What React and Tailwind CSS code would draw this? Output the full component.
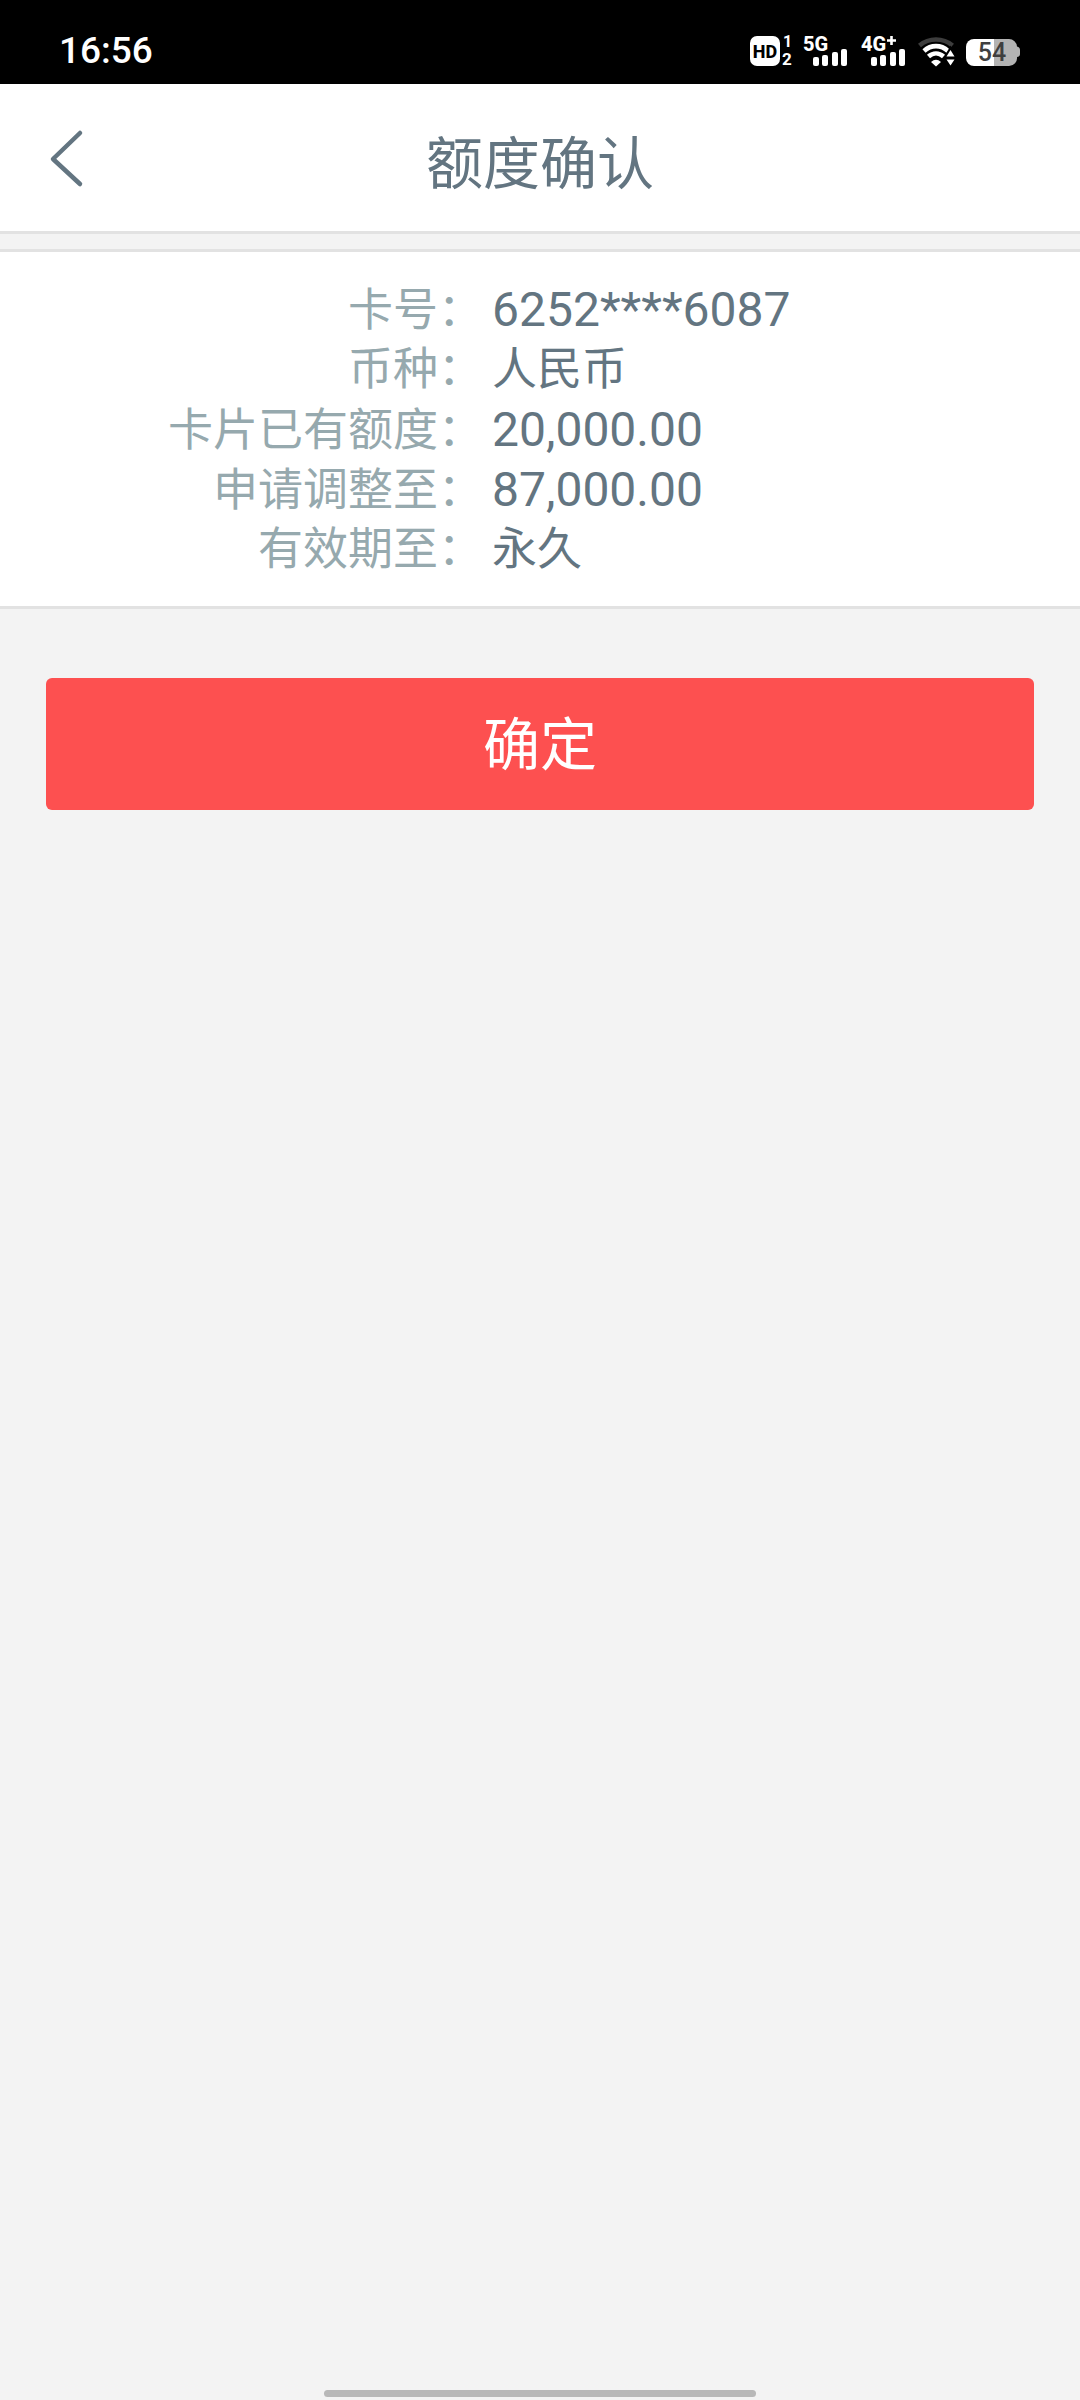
const rows = [
  { label: "卡号", value: "6252****6087", numeric: true },
  { label: "币种", value: "人民币", numeric: false },
  { label: "卡片已有额度", value: "20,000.00", numeric: true },
  { label: "申请调整至", value: "87,000.00", numeric: true },
  { label: "有效期至", value: "永久", numeric: false },
];

function HdIcon() {
  return (
    <svg className="h-9 w-[44px] shrink-0" viewBox="0 -2 44 36" role="img" aria-label="HD 1 2">
      <rect x="0" y="1" width="30" height="30" rx="7" fill="#fff" />
      <text x="15" y="23" textAnchor="middle" fontSize="18" fontWeight="800" fill="#000">HD</text>
      <text x="33" y="12" fontSize="16" fontWeight="700" fill="#fff">1</text>
      <text x="32" y="30" fontSize="17" fontWeight="700" fill="#fff">2</text>
    </svg>
  );
}

function SignalIcon({ name, plus }) {
  return (
    <svg className="h-9 w-[48px] shrink-0" viewBox="0 -2 48 36" role="img" aria-label={plus ? name + "+" : name}>
      <text x="0" y="16" fontSize="20" fontWeight="800" fill="#fff">{name}</text>
      {plus && <path d="M30.500 1V10M26 5.500H35" stroke="#fff" strokeWidth="2.600" />}
      <g fill="#fff">
        <rect x="10" y="22" width="6" height="9" rx="2" />
        <rect x="19" y="20" width="6" height="11" rx="2" />
        <rect x="29" y="17" width="6" height="14" rx="2" />
        <rect x="38" y="14" width="6" height="17" rx="2" />
      </g>
    </svg>
  );
}

function WifiIcon() {
  return (
    <svg className="h-9 w-[37px] shrink-0" viewBox="0 -2 37 36" role="img" aria-label="Wi-Fi">
      <g fill="none" strokeWidth="4.6">
        <path d="M1.500 10.500C11 2.500 25 2.500 34.500 10.500" stroke="#3d3d3d" />
        <path d="M6 16C13 9.500 23 9.500 30 16" stroke="#fff" />
        <path d="M10.500 21.500C15 17.500 21 17.500 25.500 21.500" stroke="#fff" />
      </g>
      <path d="M13 27Q18 22.500 23 27L18 31.500Z" fill="#fff" />
      <path d="M32.500 10.500L39 22.500H26Z" fill="#000" />
      <path d="M32.500 15L36.500 21.500H28.500ZM28.500 24.500H36.500L32.500 30.500Z" fill="#fff" />
    </svg>
  );
}

function BatteryIcon() {
  return (
    <svg className="h-9 w-[54px] shrink-0" viewBox="0 -2 54 36" role="img" aria-label="54%">
      <path d="M28 4H43a8 8 0 0 1 8 7.500q3 .5 3 3.500v4q0 2.500-3 3a8 8 0 0 1-8 9H28Z" fill="#b3b3b3" />
      <path d="M28 4H8a8 8 0 0 0-8 8v11a8 8 0 0 0 8 8H28Z" fill="#fff" />
      <text x="26" y="26" textAnchor="middle" fontSize="25" fontWeight="500" fill="#3f3f3f">54</text>
    </svg>
  );
}

export default function App() {
  return (
    <div className="flex min-h-screen flex-col bg-[#f3f3f3] font-['Roboto','Noto_Sans_CJK_SC',sans-serif] text-[#637581]">
      <div className="flex h-[84px] items-center justify-between bg-black pt-[18px] pr-[60px] pl-[59px] text-white">
        <span className="text-[37px] leading-[36px] font-medium">16:56</span>
        <div className="flex items-center">
          <HdIcon />
          <div className="flex items-center gap-[10px] pl-[9px]">
            <SignalIcon name="5G" />
            <SignalIcon name="4G" plus />
          </div>
          <div className="flex items-center gap-[11px] pl-[9px]">
            <WifiIcon />
            <BatteryIcon />
          </div>
        </div>
      </div>

      <header className="grid h-[150px] grid-cols-[1fr_auto_1fr] items-center border-b-[3px] border-[#e2e2e2] bg-white px-[48px]">
        <button type="button" aria-label="返回" className="justify-self-start">
          <svg className="h-[60px] w-9" viewBox="0 0 36 60" fill="none" stroke="#637581" strokeWidth="4.500" strokeLinecap="round" strokeLinejoin="round" aria-hidden="true">
            <path d="M32 5L5 31L32 56" />
          </svg>
        </button>
        <h1 className="pt-[14px] text-[57px] leading-none">额度确认</h1>
      </header>

      <main>
        <dl className="mt-[15px] border-y-[3px] border-[#e2e2e2] bg-white pt-[28px] pb-[26px]">
          {rows.map((row) => (
            <div key={row.label} className="grid h-[60px] grid-cols-[45%_1fr] items-baseline gap-x-[6px] leading-[60px]">
              <dt className="pr-[3px] text-right text-[45px] text-[#96a9ae]">{row.label}：</dt>
              <dd className={row.numeric ? "text-[48px]" : "text-[45px]"}>{row.value}</dd>
            </div>
          ))}
        </dl>
        <div className="px-[46px] pt-[69px]">
          <button type="button" className="h-[132px] w-full rounded-md bg-[#fd5050] pt-[3px] text-[57px] leading-none text-white">
            确定
          </button>
        </div>
      </main>

      <div className="mx-auto mt-auto mb-[3px] h-[7px] w-[40%] rounded-full bg-[#b8b8b8]" />
    </div>
  );
}
